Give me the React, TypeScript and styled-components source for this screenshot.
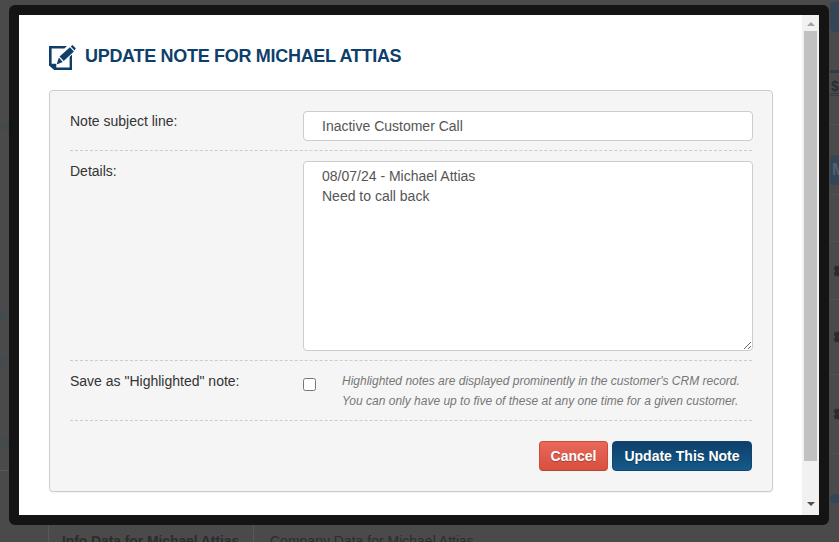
import React from "react";
import styled, { createGlobalStyle } from "styled-components";
import { FaCog } from "react-icons/fa";

const GlobalStyle = createGlobalStyle`
  html, body {
    margin: 0;
    height: 100%;
    overflow: hidden;
    background: #4a4a4a;
    font-family: "Liberation Sans", Arial, sans-serif;
    font-size: 14px;
    color: #333;
  }
`;

function NoteIcon() {
  return (
    <svg width="27" height="26" viewBox="0 0 27 26">
      <path
        fill="#0e3f6b"
        fillRule="evenodd"
        d="M0 1h18l-2.6 2.6H2.6v15.2h3.8c.6 0 .9.3.9.9v2.7h13.3V12l2.4-2.6V25H5.2L0 20.4z"
      />
      <path fill="#0e3f6b" d="M10.6 11.6 20.9 2.2l4 4.3-10.2 9.6z" />
      <path fill="#0e3f6b" d="M21.8 1.4 23.4 0l3.4 3.2-1.2 2.4z" />
      <path fill="#0e3f6b" d="M9.9 12.6 13.7 16.9 7.6 19.4z" />
    </svg>
  );
}

function App() {
  return (
    <>
      <GlobalStyle />
      <Page>
        <PageMain>
          <LeftRail>
            <LeftRow $height={118} />
            <LeftRow $height={188}>on</LeftRow>
            <LeftRow $height={47} $inset={4}>ts</LeftRow>
            <LeftRow $height={81} $inset={4}>ts</LeftRow>
            <LeftRow $height={37} $ruled>ts</LeftRow>
          </LeftRail>
          <RightRail>
            <RightRow $height={34}>
              <BlueChip $height={30} />
            </RightRow>
            <DollarRow>
              <DollarIcon>$</DollarIcon>
            </DollarRow>
            <RightRow $height={30} />
            <RightRow $height={30}>
              <BlueChip $height={30}>M</BlueChip>
            </RightRow>
            <RightRow $height={10} $ruled />
            <RightRow $height={47} $ruled />
            <RightRow $height={58} $ruled>
              <CogIcon />
            </RightRow>
            <RightRow $height={75} $ruled>
              <CogIcon />
            </RightRow>
            <RightRow $height={79} $ruled>
              <CogIcon />
            </RightRow>
            <RightRow $height={40} />
            <RightRow $height={9}>
              <BlueChip $height={9} />
            </RightRow>
          </RightRail>
        </PageMain>
        <TabBar>
          <PageTab $active>Info Data for Michael Attias</PageTab>
          <PageTab>Company Data for Michael Attias</PageTab>
        </TabBar>
      </Page>
      <Modal>
        <ModalBody>
          <Heading>
            <NoteIcon />
            <HeadingText>Update Note for Michael Attias</HeadingText>
          </Heading>
          <Panel>
            <FormRow>
              <FieldLabel>Note subject line:</FieldLabel>
              <TextInput defaultValue="Inactive Customer Call" />
            </FormRow>
            <FormRow>
              <FieldLabel>Details:</FieldLabel>
              <TextArea defaultValue={"08/07/24 - Michael Attias\nNeed to call back"} />
            </FormRow>
            <FormRow>
              <FieldLabel>Save as "Highlighted" note:</FieldLabel>
              <CheckboxCell>
                <Checkbox type="checkbox" />
                <Hint>
                  Highlighted notes are displayed prominently in the customer's CRM record.
                  <br />
                  You can only have up to five of these at any one time for a given customer.
                </Hint>
              </CheckboxCell>
            </FormRow>
            <Actions>
              <CancelButton>Cancel</CancelButton>
              <SubmitButton>Update This Note</SubmitButton>
            </Actions>
          </Panel>
        </ModalBody>
        <ScrollTrack>
          <ArrowUp />
          <ScrollThumb />
          <ArrowDown />
        </ScrollTrack>
      </Modal>
    </>
  );
}

export default App;

const Page = styled.div`
  height: 100vh;
  display: flex;
  flex-direction: column;
  overflow: hidden;
  background: #4a4a4a;
`;

const PageMain = styled.div`
  flex: 1;
  min-height: 0;
  display: flex;
  justify-content: space-between;
`;

const LeftRail = styled.div`
  flex: 0 0 10px;
  display: flex;
  flex-direction: column;
  overflow: hidden;
`;

const LeftRow = styled.div<{ $height: number; $inset?: number; $ruled?: boolean }>`
  flex: 0 0 ${p => p.$height}px;
  box-sizing: border-box;
  display: flex;
  justify-content: flex-end;
  padding-right: ${p => p.$inset || 0}px;
  border-bottom: ${p => (p.$ruled ? "1px solid #575757" : "none")};
  font-size: 16px;
  white-space: nowrap;
  color: #3c4a52;
`;

const RightRail = styled.div`
  flex: 0 0 9px;
  display: flex;
  flex-direction: column;
  overflow: hidden;
`;

const RightRow = styled.div<{ $height: number; $ruled?: boolean }>`
  flex: 0 0 ${p => p.$height}px;
  box-sizing: border-box;
  display: flex;
  align-items: center;
  border-bottom: ${p => (p.$ruled ? "1px solid #525252" : "none")};
`;

const DollarRow = styled.div`
  flex: 0 0 91px;
  box-sizing: border-box;
  display: flex;
  align-items: flex-end;
  padding-bottom: 28px;
  border-bottom: 1px solid #525252;
`;

const DollarIcon = styled.span`
  flex: 0 0 20px;
  padding: 6px 0 0 1px;
  border-top: 3px solid #2f3c48;
  border-bottom: 3px double #2f3c48;
  font-size: 14px;
  font-weight: bold;
  line-height: 14px;
  color: #262d33;
`;

const BlueChip = styled.div<{ $height: number }>`
  flex: 0 0 20px;
  height: ${p => p.$height}px;
  padding-left: 2px;
  background: #344656;
  border-radius: 4px;
  font-size: 16px;
  font-weight: bold;
  line-height: ${p => p.$height}px;
  color: #51606d;
`;

const CogIcon = styled(FaCog)`
  flex: none;
  width: 16px;
  height: 16px;
  margin-left: 3px;
  color: #2b2b2b;
`;

const TabBar = styled.div`
  flex: 0 0 17px;
  display: flex;
  padding-left: 48px;
  overflow: hidden;
`;

const PageTab = styled.div<{ $active?: boolean }>`
  box-sizing: border-box;
  flex: ${p => (p.$active ? "0 0 205px" : "none")};
  padding: 8px 0 0 ${p => (p.$active ? "13px" : "16px")};
  border-left: 1px solid #575757;
  font-size: 14px;
  font-weight: ${p => (p.$active ? "bold" : "normal")};
  letter-spacing: ${p => (p.$active ? "-0.1px" : "0")};
  color: #2d2d2d;
  white-space: nowrap;
`;

const Modal = styled.div`
  position: fixed;
  top: 5px;
  left: 9px;
  width: 800px;
  height: 500px;
  display: flex;
  border: 10px solid #141414;
  border-radius: 6px;
  background: #fff;
`;

const ModalBody = styled.div`
  flex: 1;
  min-width: 0;
  padding: 30px 29px 0 30px;
`;

const Heading = styled.div`
  display: flex;
  align-items: center;
  gap: 9px;
  height: 26px;
  margin-bottom: 19px;
`;

const HeadingText = styled.h2`
  margin: 0 0 3px;
  font-size: 18px;
  font-weight: bold;
  letter-spacing: -0.3px;
  text-transform: uppercase;
  color: #0e3f6b;
`;

const Panel = styled.div`
  box-sizing: border-box;
  height: 402px;
  padding: 20px 20px 0;
  background: #f5f5f5;
  border: 1px solid #ccc;
  border-radius: 4px;
  box-shadow: 0 1px 1px rgba(0, 0, 0, 0.05);
`;

const FormRow = styled.div`
  display: flex;
  padding-bottom: 9px;
  margin-bottom: 10px;
  border-bottom: 1px dashed #ccc;
`;

const FieldLabel = styled.label`
  flex: 0 0 233px;
  line-height: 20px;
`;

const TextInput = styled.input`
  flex: 0 0 450px;
  box-sizing: border-box;
  height: 30px;
  padding: 0 18px;
  background: #fff;
  border: 1px solid #ccc;
  border-radius: 4px;
  font: 14px "Liberation Sans", Arial, sans-serif;
  color: #555;
  outline: none;
`;

const TextArea = styled.textarea`
  flex: 0 0 450px;
  box-sizing: border-box;
  height: 190px;
  padding: 4px 18px;
  background: #fff;
  border: 1px solid #ccc;
  border-radius: 4px;
  font: 14px/20px "Liberation Sans", Arial, sans-serif;
  color: #555;
  outline: none;
  display: block;
`;

const CheckboxCell = styled.div`
  flex: 1;
  min-width: 0;
  display: flex;
  height: 40px;
`;

const Checkbox = styled.input`
  flex: none;
  width: 13px;
  height: 13px;
  margin: 7px 26px 0 0;
`;

const Hint = styled.p`
  margin: 0;
  font-size: 12px;
  font-style: italic;
  line-height: 20px;
  color: #777;
  white-space: nowrap;
`;

const Actions = styled.div`
  display: flex;
  justify-content: flex-end;
  gap: 4px;
  margin-top: 20px;
`;

const ActionButton = styled.button`
  box-sizing: border-box;
  height: 30px;
  padding: 0;
  border-radius: 4px;
  font: bold 14px "Liberation Sans", Arial, sans-serif;
  color: #fff;
  text-shadow: 0 1px 1px rgba(0, 0, 0, 0.3);
  cursor: pointer;
`;

const CancelButton = styled(ActionButton)`
  width: 69px;
  background: linear-gradient(#e8685a, #d9503e);
  border: 1px solid #d04c3a;
  border-bottom-color: #b0483a;
`;

const SubmitButton = styled(ActionButton)`
  width: 140px;
  background: linear-gradient(#0e3f6b, #155a8a);
  border: 1px solid #0f4670;
`;

const ScrollTrack = styled.div`
  flex: 0 0 17px;
  display: flex;
  flex-direction: column;
  align-items: center;
  background: #f1f1f1;
`;

const ArrowUp = styled.div`
  width: 0;
  height: 0;
  margin: 7px 0 5px;
  border-left: 4px solid transparent;
  border-right: 4px solid transparent;
  border-bottom: 4px solid #a3a3a3;
`;

const ScrollThumb = styled.div`
  width: 13px;
  height: 430px;
  background: #c1c1c1;
`;

const ArrowDown = styled.div`
  width: 0;
  height: 0;
  margin-top: 41px;
  border-left: 4px solid transparent;
  border-right: 4px solid transparent;
  border-top: 4px solid #505050;
`;
